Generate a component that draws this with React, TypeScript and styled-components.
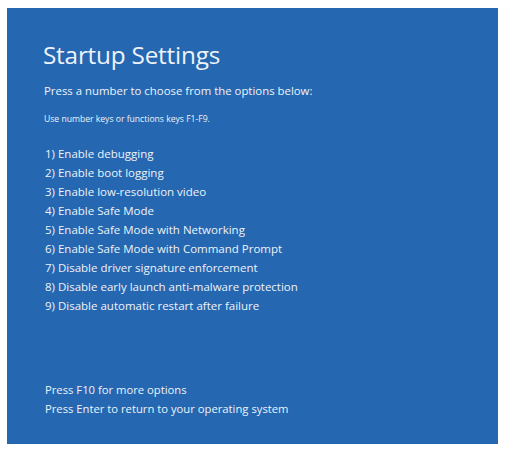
import React from "react";
import styled, { createGlobalStyle } from "styled-components";

const Global = createGlobalStyle`
  html, body { margin: 0; padding: 0; background: #ffffff; }
  body { font-family: "Open Sans", "Noto Sans", sans-serif; }
`;

const Page = styled.div`
  padding: 8px 7px 10px 7px;
`;

const Screen = styled.div`
  width: 491px;
  height: 436px;
  box-sizing: border-box;
  background: #2567b0;
  color: #eef3fa;
  padding: 30px 0 0 36px;
  display: flex;
  flex-direction: column;
`;

const Title = styled.h1`
  margin: 0;
  font-size: 24.3px;
  font-weight: 400;
  line-height: 34px;
  letter-spacing: -0.2px;
`;

const Prompt = styled.p`
  margin: 11px 0 0 1px;
  font-size: 11.4px;
  line-height: 16px;
`;

const Hint = styled.p`
  margin: 14px 0 0 1px;
  font-size: 8.6px;
  line-height: 12px;
`;

const List = styled.ol`
  list-style: none;
  margin: 19px 0 0 2px;
  padding: 0;
  display: flex;
  flex-direction: column;
`;

const Item = styled.li`
  font-size: 11.5px;
  line-height: 19px;
`;

const Footer = styled.div`
  margin-top: auto;
  margin-bottom: 26px;
  margin-left: 2px;
  display: flex;
  flex-direction: column;
`;

const FooterLine = styled.div`
  font-size: 11.25px;
  line-height: 19px;
`;

const options = [
  "Enable debugging",
  "Enable boot logging",
  "Enable low-resolution video",
  "Enable Safe Mode",
  "Enable Safe Mode with Networking",
  "Enable Safe Mode with Command Prompt",
  "Disable driver signature enforcement",
  "Disable early launch anti-malware protection",
  "Disable automatic restart after failure",
];

export default function App() {
  return (
    <>
      <Global />
      <Page>
        <Screen>
          <Title>Startup Settings</Title>
          <Prompt>Press a number to choose from the options below:</Prompt>
          <Hint>Use number keys or functions keys F1-F9.</Hint>
          <List>
            {options.map((o, i) => (
              <Item key={i}>
                {i + 1}) {o}
              </Item>
            ))}
          </List>
          <Footer>
            <FooterLine>Press F10 for more options</FooterLine>
            <FooterLine>Press Enter to return to your operating system</FooterLine>
          </Footer>
        </Screen>
      </Page>
    </>
  );
}
